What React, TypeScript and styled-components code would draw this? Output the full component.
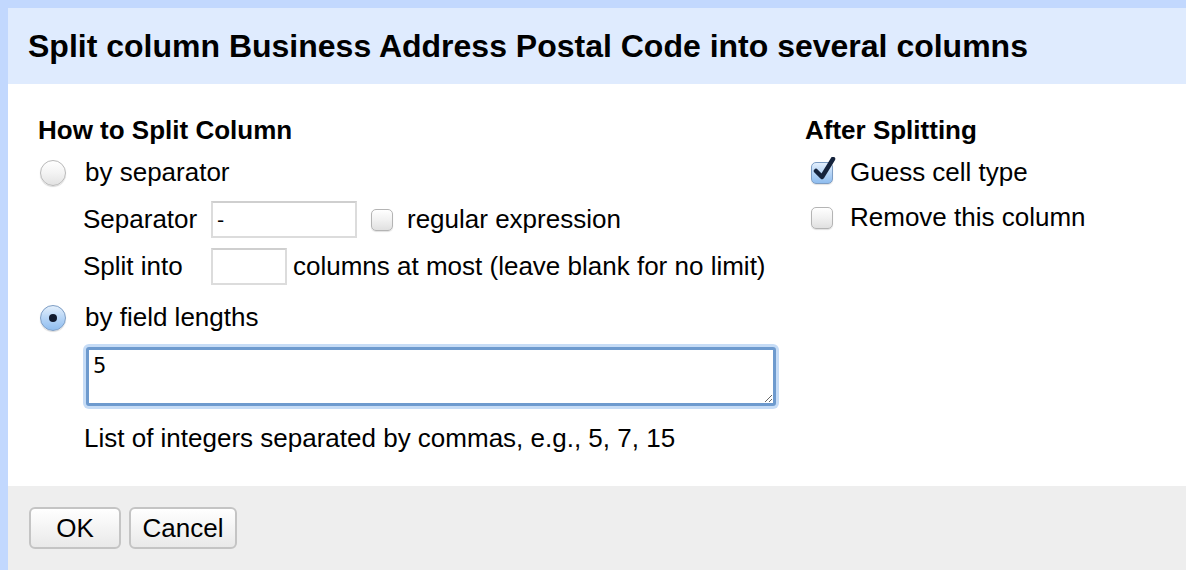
import React from "react";
import styled, { createGlobalStyle } from "styled-components";

const GlobalStyle = createGlobalStyle`
    html, body {
        margin: 0;
        padding: 0;
        background: #ffffff;
    }
    body {
        font-family: "Liberation Sans", Arial, Helvetica, sans-serif;
        color: #000;
    }
`

const Dialog = styled.div`
    width: 1186px;
    height: 570px;
    box-sizing: border-box;
    border-top: 8px solid #c2d8fe;
    border-left: 8px solid #c2d8fe;
    display: flex;
    flex-direction: column;
    overflow: hidden;
`

const Header = styled.div`
    height: 76px;
    flex: none;
    background-color: #dfebfe;
    display: flex;
    align-items: center;
    padding-left: 20px;
    padding-top: 1px;
    box-sizing: border-box;
`

const Title = styled.h1`
    margin: 0;
    font-size: 32px;
    font-weight: bold;
    letter-spacing: 0;
`

const Body = styled.div`
    flex: 1;
    background: #fff;
    display: grid;
    grid-template-columns: 767px 1fr;
    padding: 31px 0 0 30px;
    box-sizing: border-box;
`

const Column = styled.div`
    display: flex;
    flex-direction: column;
`

const SectionTitle = styled.div<{ $gap?: number }>`
    font-size: 26px;
    font-weight: bold;
    line-height: 30px;
    height: 30px;
    margin-bottom: ${p => p.$gap ?? 4}px;
`

const Row = styled.div<{ $indent?: number; $top?: number; $height?: number }>`
    display: flex;
    align-items: center;
    height: ${p => p.$height ?? 47}px;
    font-size: 26px;
    padding-left: ${p => p.$indent || 0}px;
    margin-top: ${p => p.$top || 0}px;
    white-space: nowrap;
`

const Label = styled.span<{ $width?: number }>`
    display: inline-block;
    width: ${p => (p.$width ? `${p.$width}px` : "auto")};
    flex: none;
`

const Radio = styled.span<{ $checked?: boolean }>`
    width: 24px;
    height: 24px;
    border-radius: 50%;
    margin: 0 19px 0 2px;
    flex: none;
    display: flex;
    align-items: center;
    justify-content: center;
    border: 1px solid ${p => (p.$checked ? "#7d9dc4" : "#b9b9b9")};
    background: ${p => p.$checked
        ? "linear-gradient(#e3effc 0%, #b7d5f6 50%, #8fbdef 100%)"
        : "linear-gradient(#ffffff 0%, #f3f3f3 50%, #e2e2e2 100%)"};
    box-shadow: 0 1px 1px rgba(0, 0, 0, 0.15);

    &::after {
        content: "";
        display: ${p => (p.$checked ? "block" : "none")};
        width: 8px;
        height: 8px;
        border-radius: 50%;
        background: #111a2e;
    }
`

const Box = styled.span<{ $checked?: boolean; $gap?: number }>`
    position: relative;
    width: 20px;
    height: 20px;
    border-radius: 5px;
    flex: none;
    margin-right: ${p => p.$gap ?? 17}px;
    border: 1px solid ${p => (p.$checked ? "#7d9dc4" : "#b4b4b4")};
    background: ${p => p.$checked
        ? "linear-gradient(#e3effc 0%, #b7d5f6 50%, #8fbdef 100%)"
        : "linear-gradient(#ffffff 0%, #f1f1f1 50%, #e0e0e0 100%)"};
    box-shadow: 0 1px 1px rgba(0, 0, 0, 0.12);

    & > svg {
        position: absolute;
        left: 1px;
        top: -6px;
    }
`

const TextInput = styled.input<{ $width: number }>`
    width: ${p => p.$width}px;
    height: 37px;
    box-sizing: border-box;
    border: 2px solid #dcdcdc;
    border-top-color: #cfcfcf;
    padding: 0 4px;
    font-family: "DejaVu Sans", sans-serif;
    font-size: 20px;
    color: #000;
    outline: none;
    flex: none;
`

const FieldArea = styled.textarea`
    width: 690px;
    height: 59px;
    margin: 6px 0 0 48px;
    box-sizing: border-box;
    border: 3px solid #6d9ace;
    border-radius: 3px;
    box-shadow: 0 0 0 3px #c6dcf6;
    padding: 3px 4px;
    font-family: "DejaVu Sans", sans-serif;
    font-size: 21px;
    line-height: 26px;
    color: #000;
    outline: none;
    resize: both;
`

const Hint = styled.div`
    font-size: 26px;
    line-height: 30px;
    padding-left: 46px;
    margin-top: 17px;
`

const Footer = styled.div`
    height: 84px;
    flex: none;
    background: #eeeeee;
    display: flex;
    align-items: flex-start;
    gap: 8px;
    padding: 21px 0 0 21px;
    box-sizing: border-box;
`

const Button = styled.button<{ $width: number }>`
    width: ${p => p.$width}px;
    height: 42px;
    border: 2px solid #c4c4c4;
    border-radius: 6px;
    background: linear-gradient(#ffffff 0%, #f4f4f4 50%, #e9e9e9 100%);
    font-family: "Liberation Sans", Arial, sans-serif;
    font-size: 26px;
    color: #000;
    padding: 0;
`

const CheckMark = () => (
    <svg width="26" height="26" viewBox="0 0 26 26">
        <path d="M3 14 L9 20 L20 2" fill="none" stroke="#15233c" strokeWidth="4.5" strokeLinecap="round" strokeLinejoin="round" />
    </svg>
)

export default function App() {
    return (
        <>
            <GlobalStyle />
            <Dialog>
                <Header>
                    <Title>Split column Business Address Postal Code into several columns</Title>
                </Header>
                <Body>
                    <Column>
                        <SectionTitle>How to Split Column</SectionTitle>
                        <Row>
                            <Radio />
                            <Label>by separator</Label>
                        </Row>
                        <Row $indent={45}>
                            <Label $width={128}>Separator</Label>
                            <TextInput $width={146} defaultValue="-" />
                            <Box $gap={14} style={{ marginLeft: 14 }} />
                            <Label>regular expression</Label>
                        </Row>
                        <Row $indent={45}>
                            <Label $width={128}>Split into</Label>
                            <TextInput $width={76} defaultValue="" />
                            <Label style={{ marginLeft: 6 }}>columns at most (leave blank for no limit)</Label>
                        </Row>
                        <Row $top={4}>
                            <Radio $checked />
                            <Label>by field lengths</Label>
                        </Row>
                        <FieldArea defaultValue="5" />
                        <Hint>List of integers separated by commas, e.g., 5, 7, 15</Hint>
                    </Column>
                    <Column>
                        <SectionTitle $gap={5}>After Splitting</SectionTitle>
                        <Row $height={45} $indent={6}>
                            <Box $checked>
                                <CheckMark />
                            </Box>
                            <Label>Guess cell type</Label>
                        </Row>
                        <Row $height={45} $indent={6}>
                            <Box />
                            <Label>Remove this column</Label>
                        </Row>
                    </Column>
                </Body>
                <Footer>
                    <Button $width={92}>OK</Button>
                    <Button $width={108}>Cancel</Button>
                </Footer>
            </Dialog>
        </>
    );
}
